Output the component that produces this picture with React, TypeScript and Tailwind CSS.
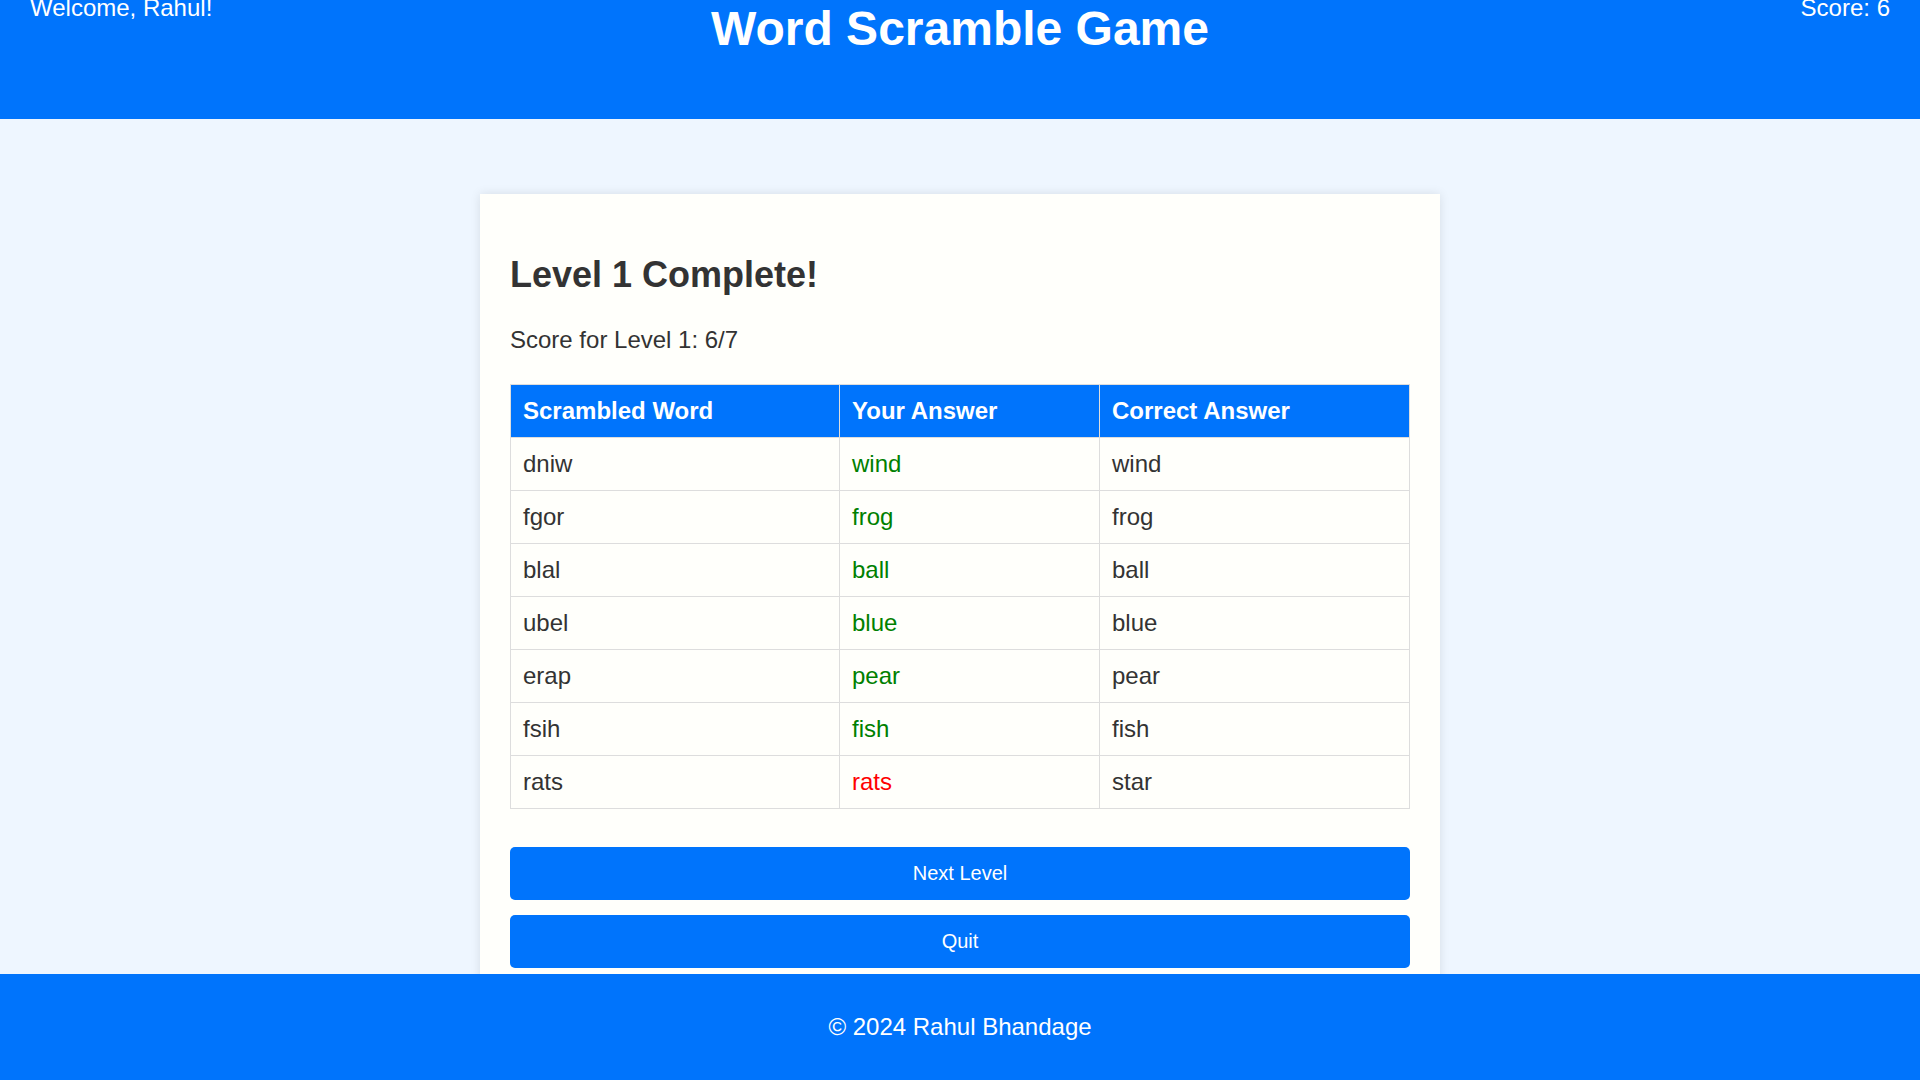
import React from 'react';

const rows = [
  { scrambled: 'dniw', answer: 'wind', correct: 'wind' },
  { scrambled: 'fgor', answer: 'frog', correct: 'frog' },
  { scrambled: 'blal', answer: 'ball', correct: 'ball' },
  { scrambled: 'ubel', answer: 'blue', correct: 'blue' },
  { scrambled: 'erap', answer: 'pear', correct: 'pear' },
  { scrambled: 'fsih', answer: 'fish', correct: 'fish' },
  { scrambled: 'rats', answer: 'rats', correct: 'star' },
];

export default function App() {
  return (
    <div className="min-h-screen bg-[#eef6ff] font-['Liberation_Sans',Arial,sans-serif] text-[#333]">
      {/* Header */}
      <header className="h-[119px] bg-[#0074fc] text-white px-[30px] grid grid-cols-[1fr_auto_1fr] items-start overflow-hidden">
        <div className="justify-self-start -mt-[6px] text-[24px] leading-[normal]">Welcome, Rahul!</div>
        <h1 className="mt-[1px] text-[48px] font-bold leading-[normal]">Word Scramble Game</h1>
        <div className="justify-self-end -mt-[6px] text-[24px] leading-[normal]">Score: 6</div>
      </header>

      <main className="flex justify-center pt-[75px] pb-[120px]">
        <div className="w-[960px] bg-[#fffffb] p-[30px] shadow-[0_0_10px_rgba(0,0,0,0.1)]">
          <h2 className="mt-[30px] text-[36px] font-bold leading-[normal]">Level 1 Complete!</h2>
          <p className="mt-[30px] text-[24px] leading-[normal]">Score for Level 1: 6/7</p>

          <table className="mt-[30px] w-full border-collapse text-[24px] leading-[normal]">
            <thead>
              <tr className="bg-[#0074fc] text-white">
                <th className="w-[329px] border border-[#ddd] px-[12px] py-[12px] text-left font-bold">Scrambled Word</th>
                <th className="w-[260px] border border-[#ddd] px-[12px] py-[12px] text-left font-bold">Your Answer</th>
                <th className="border border-[#ddd] px-[12px] py-[12px] text-left font-bold">Correct Answer</th>
              </tr>
            </thead>
            <tbody>
              {rows.map((r) => (
                <tr key={r.scrambled}>
                  <td className="border border-[#ddd] px-[12px] py-[12px]">{r.scrambled}</td>
                  <td
                    className={
                      r.answer === r.correct
                        ? 'border border-[#ddd] px-[12px] py-[12px] text-[#008000]'
                        : 'border border-[#ddd] px-[12px] py-[12px] text-[#ff0000]'
                    }
                  >
                    {r.answer}
                  </td>
                  <td className="border border-[#ddd] px-[12px] py-[12px]">{r.correct}</td>
                </tr>
              ))}
            </tbody>
          </table>

          <button className="mt-[38px] block w-full rounded-[5px] bg-[#0074fc] py-[15px] text-[20px] leading-[normal] text-white">
            Next Level
          </button>
          <button className="mt-[15px] block w-full rounded-[5px] bg-[#0074fc] py-[15px] text-[20px] leading-[normal] text-white">
            Quit
          </button>
        </div>
      </main>

      {/* Footer */}
      <footer className="fixed inset-x-0 bottom-0 h-[106px] bg-[#0074fc] text-white text-[24px] leading-[normal] flex items-center justify-center">
        © 2024 Rahul Bhandage
      </footer>
    </div>
  );
}
